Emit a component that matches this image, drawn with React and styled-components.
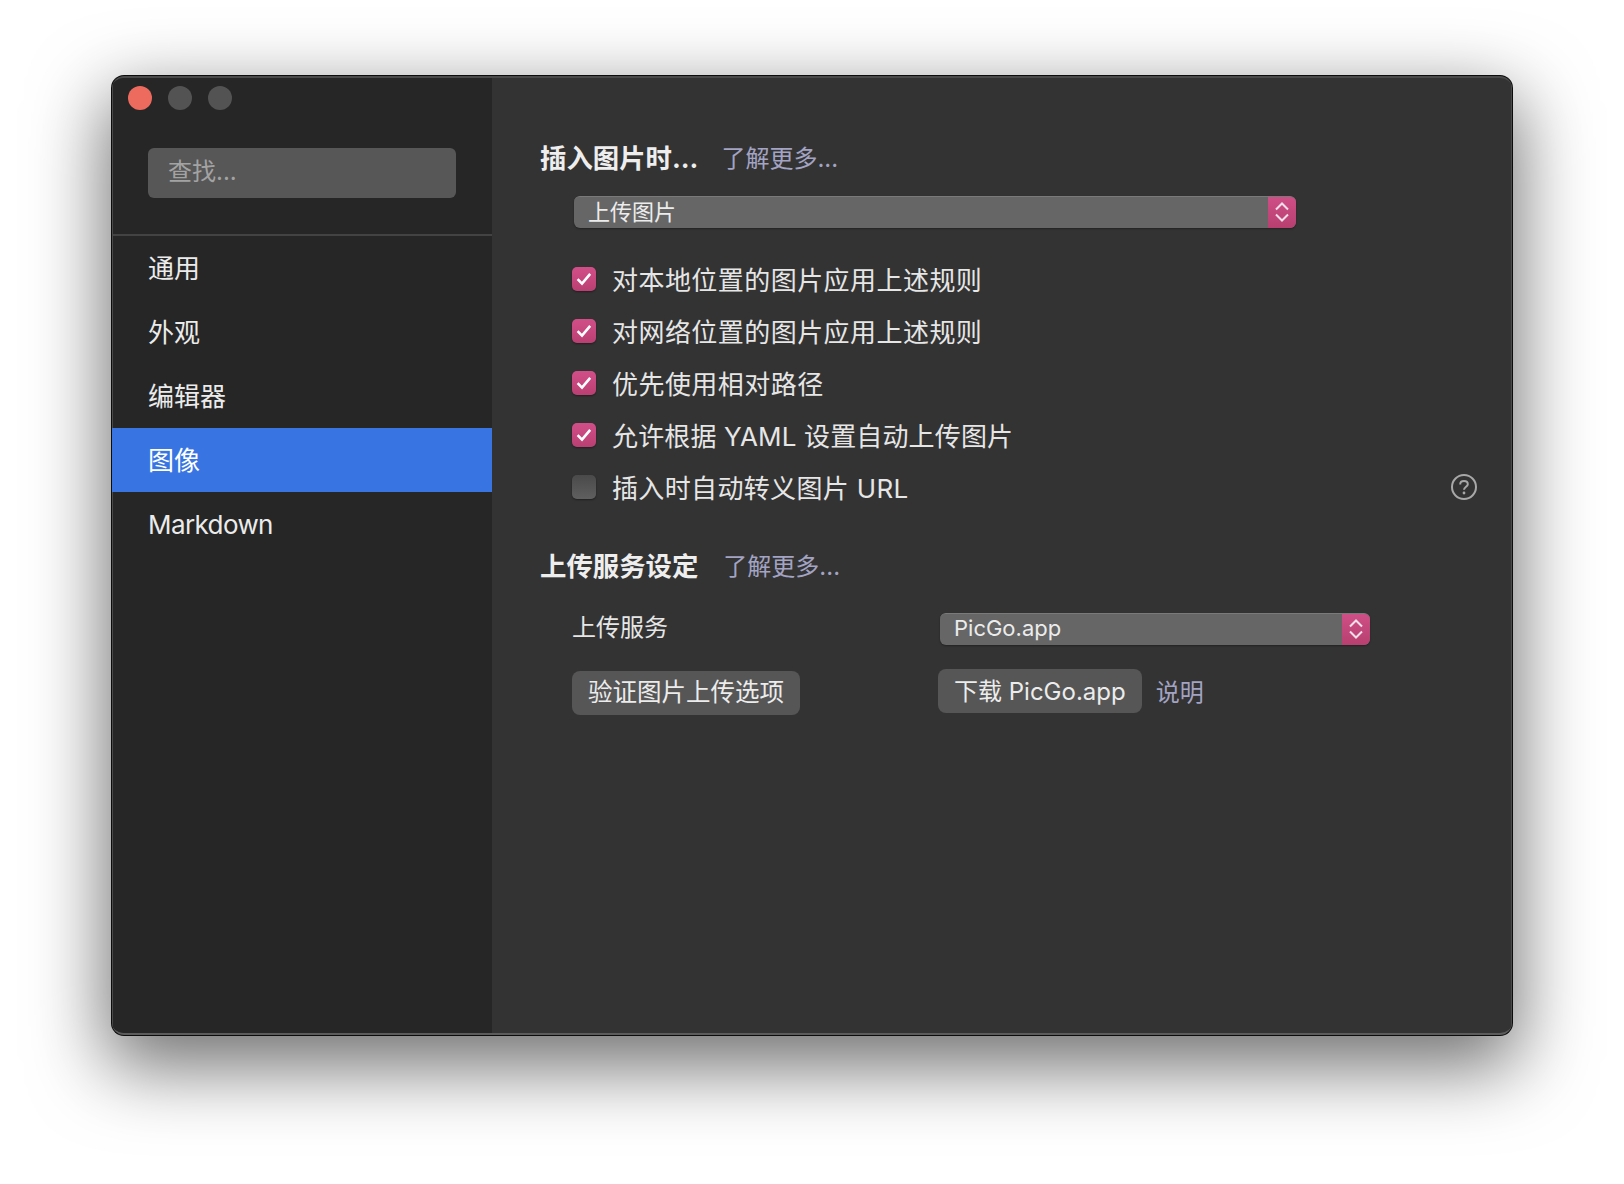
import React from "react";
import styled, { createGlobalStyle } from "styled-components";

const GlobalStyle = createGlobalStyle`
  html, body {
    margin: 0;
    padding: 0;
    background: #ffffff;
  }
  * {
    box-sizing: border-box;
  }
`;

const navItems = ["通用", "外观", "编辑器", "图像", "Markdown"];

const imageOptions = [
  { label: "对本地位置的图片应用上述规则", checked: true, spacing: 0.45 },
  { label: "对网络位置的图片应用上述规则", checked: true, spacing: 0.45 },
  { label: "优先使用相对路径", checked: true, spacing: 0.45 },
  { label: "允许根据 YAML 设置自动上传图片", checked: true, spacing: 0.15 },
  { label: "插入时自动转义图片 URL", checked: false, spacing: 0.35, help: true },
];

const Chevrons = () => (
  <svg width="16" height="24" viewBox="0 0 16 24" fill="none">
    <path d="M2 9.5 L8 3.5 L14 9.5" stroke="#f6dfe9" strokeWidth="2" />
    <path d="M2 14.5 L8 20.5 L14 14.5" stroke="#f6dfe9" strokeWidth="2" />
  </svg>
);

const Tick = () => (
  <svg width="16" height="14" viewBox="0 0 16 14" fill="none">
    <path d="M1.6 7.2 L6 11.6 L14.2 1.8" stroke="#ffffff" strokeWidth="2.6" />
  </svg>
);

const HelpIcon = () => (
  <svg width="26" height="26" viewBox="0 0 26 26" fill="none">
    <circle cx="13" cy="13" r="12" stroke="#a8a8a8" strokeWidth="2" />
    <path
      d="M9.2 10.4 C9.2 8.2 10.9 7 13 7 C15.2 7 16.8 8.3 16.8 10.2 C16.8 12.6 13 13 13 15.8"
      stroke="#a8a8a8"
      strokeWidth="2"
    />
    <circle cx="13" cy="19" r="1.4" fill="#a8a8a8" />
  </svg>
);

const App = () => {
  return (
    <Page>
      <GlobalStyle />
      <Window>
        <Sidebar>
          <Lights>
            <Light $color="#ed6a5e" />
            <Light $color="#535353" />
            <Light $color="#535353" />
          </Lights>
          <SearchBox>查找...</SearchBox>
          <Nav>
            {navItems.map((item) => (
              <NavItem key={item} $active={item === "图像"} $latin={item === "Markdown"}>
                {item}
              </NavItem>
            ))}
          </Nav>
        </Sidebar>
        <Content>
          <Heading>
            <HeadingTitle>插入图片时...</HeadingTitle>
            <MoreLink>了解更多...</MoreLink>
          </Heading>
          <WideSelect>
            <SelectText $cjk>上传图片</SelectText>
            <SelectArrow>
              <Chevrons />
            </SelectArrow>
          </WideSelect>
          <Options>
            {imageOptions.map((option) => (
              <OptionRow key={option.label}>
                <CheckBox $checked={option.checked}>
                  {option.checked && <Tick />}
                </CheckBox>
                <OptionLabel $spacing={option.spacing}>{option.label}</OptionLabel>
                {option.help && (
                  <HelpSlot>
                    <HelpIcon />
                  </HelpSlot>
                )}
              </OptionRow>
            ))}
          </Options>
          <UploadHeading>
            <HeadingTitle>上传服务设定</HeadingTitle>
            <MoreLink>了解更多...</MoreLink>
          </UploadHeading>
          <ServiceGrid>
            <ServiceLabel>上传服务</ServiceLabel>
            <ServiceSelect>
              <SelectText>PicGo.app</SelectText>
              <SelectArrow>
                <Chevrons />
              </SelectArrow>
            </ServiceSelect>
            <VerifyButton>验证图片上传选项</VerifyButton>
            <DownloadCell>
              <Button>下载 PicGo.app</Button>
              <NoteLink>说明</NoteLink>
            </DownloadCell>
          </ServiceGrid>
        </Content>
      </Window>
    </Page>
  );
};

export default App;

const Page = styled.div`
  width: 1624px;
  height: 1184px;
  padding: 76px 112px 0;
  overflow: hidden;
  font-family: Inter, "Noto Sans CJK SC", sans-serif;
`;

const Window = styled.div`
  width: 1400px;
  height: 959px;
  display: flex;
  overflow: hidden;
  border-radius: 12px;
  border-top: 2px solid #4a4a4a;
  border-bottom: 2px solid #5c5c5c;
  background: #333333;
  box-shadow: 0 0 0 1px #0c0c0c, 0 26px 74px 6px rgba(0, 0, 0, 0.56);
`;

const Sidebar = styled.div`
  width: 380px;
  flex-shrink: 0;
  border-left: 1px solid #4a4a4a;
  background: #262626;
`;

const Lights = styled.div`
  height: 43px;
  padding: 8px 0 0 15px;
  display: flex;
  gap: 16px;
`;

const Light = styled.span`
  width: 24px;
  height: 24px;
  border-radius: 50%;
  background: ${(props) => props.$color};
`;

const SearchBox = styled.div`
  width: 308px;
  height: 50px;
  margin: 27px 0 0 35px;
  padding: 0 20px;
  border-radius: 6px;
  background: #575757;
  color: #a3a3a3;
  font-size: 24px;
  line-height: 48px;
`;

const Nav = styled.div`
  margin-top: 36px;
  border-top: 2px solid #434343;
`;

const NavItem = styled.div`
  height: 64px;
  margin-left: -1px;
  padding: 0 0 ${(props) => (props.$latin ? "0" : "4px")} 36px;
  display: flex;
  align-items: center;
  font-size: 26px;
  letter-spacing: ${(props) => (props.$latin ? "-0.6px" : "0")};
  color: ${(props) => (props.$active ? "#ffffff" : "#ebebeb")};
  background: ${(props) => (props.$active ? "#3875e3" : "transparent")};
`;

const Content = styled.div`
  flex: 1;
  padding: 60px 34px 0 48px;
  border-right: 1px solid #4a4a4a;
  color: #e6e6e6;
`;

const Heading = styled.div`
  height: 36px;
  display: flex;
  align-items: center;
  gap: 23px;
`;

const UploadHeading = styled(Heading)`
  margin-top: 33px;
  gap: 25px;
`;

const HeadingTitle = styled.span`
  font-size: 26.4px;
  font-weight: 700;
  color: #eeeeee;
`;

const MoreLink = styled.span`
  font-size: 24px;
  color: #a3a3c3;
`;

const SelectBase = styled.div`
  height: 32px;
  display: flex;
  align-items: center;
  overflow: hidden;
  border-radius: 6px;
  border-top: 1px solid #7a7a7a;
  background: #666666;
  box-shadow: 0 1px 2px rgba(0, 0, 0, 0.35);
`;

const WideSelect = styled(SelectBase)`
  width: 722px;
  margin: 22px 0 0 34px;
`;

const ServiceSelect = styled(SelectBase)`
  width: 430px;
  margin: 2px 0 0 2px;
`;

const SelectText = styled.span`
  flex: 1;
  padding: 0 0 ${(props) => (props.$cjk ? "6px" : "3px")} 14px;
  font-size: 22px;
  color: #ececec;
`;

const SelectArrow = styled.span`
  width: 28px;
  height: 32px;
  margin-top: -1px;
  display: flex;
  align-items: center;
  justify-content: center;
  background: linear-gradient(#cf4f86, #b83f70);
`;

const Options = styled.div`
  margin: 25px 0 0 32px;
`;

const OptionRow = styled.div`
  height: 52px;
  display: flex;
  align-items: center;
`;

const CheckBox = styled.span`
  width: 24px;
  height: 24px;
  display: flex;
  align-items: center;
  justify-content: center;
  border-radius: 5px;
  background: ${(props) =>
    props.$checked ? "linear-gradient(#d14f88, #bb3f72)" : "linear-gradient(#4a4a4a, #5f5f5f)"};
  box-shadow: 0 1px 2px rgba(0, 0, 0, 0.4);
`;

const OptionLabel = styled.span`
  margin-left: 16px;
  padding-bottom: 2px;
  font-size: 26px;
  letter-spacing: ${(props) => props.$spacing}px;
  color: #e6e6e6;
`;

const HelpSlot = styled.span`
  margin-left: auto;
  display: flex;
`;

const ServiceGrid = styled.div`
  margin: 26px 0 0 32px;
  display: grid;
  grid-template-columns: 366px 1fr;
  row-gap: 24px;
  align-items: center;
`;

const ServiceLabel = styled.span`
  font-size: 24px;
  padding-bottom: 4px;
  color: #e6e6e6;
`;

const Button = styled.span`
  height: 44px;
  padding: 0 16px 2px;
  display: inline-flex;
  align-items: center;
  border-radius: 8px;
  background: #565656;
  font-size: 24px;
  color: #ececec;
`;

const VerifyButton = styled(Button)`
  width: 228px;
  padding-bottom: 5px;
  justify-self: start;
  font-size: 24.5px;
  white-space: nowrap;
`;

const DownloadCell = styled.div`
  display: flex;
  align-items: center;
  gap: 14px;
  margin-top: -5px;
`;

const NoteLink = styled.span`
  font-size: 24px;
  color: #a3a3c3;
`;
